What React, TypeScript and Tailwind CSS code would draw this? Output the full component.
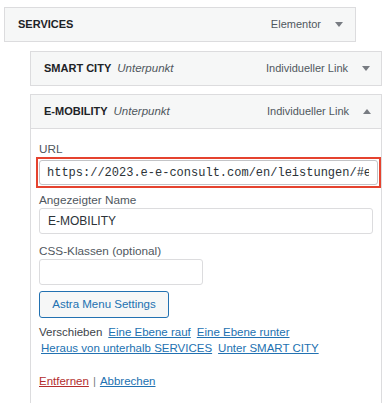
import React from 'react';

const font = { fontFamily: '"Liberation Sans", Arial, sans-serif' };

function Caret({ up }: { up?: boolean }) {
  return (
    <svg width="8" height="5" viewBox="0 0 8 5" className="shrink-0">
      {up ? <path d="M0 5 L4 0 L8 5 Z" fill="#787c82" /> : <path d="M0 0 L8 0 L4 5 Z" fill="#787c82" />}
    </svg>
  );
}

function ItemHandle({ title, sub, type, up, className }: { title: string; sub?: string; type: string; up?: boolean; className: string }) {
  return (
    <div className={`flex h-[35px] items-center justify-between border border-[#dcdcde] bg-[#f6f7f7] ${className}`}>
      <div className="flex items-baseline gap-[6px]">
        <span className="text-[11px] font-bold text-[#1d2327]">{title}</span>
        {sub && <span className="text-[11.5px] italic text-[#50575e]">{sub}</span>}
      </div>
      <div className="flex items-center gap-[14px]">
        <span className="text-[11px] text-[#50575e]">{type}</span>
        <Caret up={up} />
      </div>
    </div>
  );
}

export default function App() {
  return (
    <div className="h-[403px] w-[383px] overflow-hidden bg-white pl-[4px] pt-[7px]" style={font}>
      <ItemHandle title="SERVICES" type="Elementor" className="w-[352px] pl-[13px] pr-[12px]" />

      <ItemHandle title="SMART CITY" sub="Unterpunkt" type="Individueller Link" className="ml-[26px] mt-[9px] w-[352px] pl-[13px] pr-[11px]" />

      <div className="ml-[26px] mt-[8px] w-[352px] border-x border-t border-[#dcdcde]">
        <ItemHandle title="E-MOBILITY" sub="Unterpunkt" type="Individueller Link" up className="-mx-px -mt-px pl-[13px] pr-[10px]" />

        <div className="h-[300px] pl-[8px] pt-[12px] text-[11.75px] text-[#50575e]">
          <div className="leading-[16px]">URL</div>
          <div className="-ml-[3px] h-[31px] w-[345px] border-2 border-[#e5432f] p-[1px]">
            <div className="flex h-full items-center rounded-[3px] border border-[#c3c4c7] bg-white pl-[7px] pr-[8px]">
              <div
                className="overflow-hidden whitespace-nowrap text-[12px] text-[#2c3338]"
                style={{ fontFamily: '"Liberation Mono", monospace' }}
              >
                https://2023.e-e-consult.com/en/leistungen/#e-mobility
              </div>
            </div>
          </div>

          <div className="mt-[4px] leading-[16px]">Angezeigter Name</div>
          <div className="flex h-[26px] w-[334px] items-center rounded-[3px] border border-[#dcdcde] bg-white pl-[8px] text-[12px] text-[#2c3338]">
            E-MOBILITY
          </div>

          <div className="mt-[8px] leading-[17px]">CSS-Klassen (optional)</div>
          <div className="h-[26px] w-[164px] rounded-[3px] border border-[#dcdcde] bg-white" />

          <button className="mt-[6px] flex h-[27px] w-[130px] items-center justify-center rounded-[3px] border border-[#2271b1] bg-[#f6f7f7] text-[11.5px] text-[#2271b1]">
            Astra Menu Settings
          </button>

          <div className="mt-[6px] text-[11.5px] leading-[16px]">
            <div className="flex gap-[6px] text-[#3c434a]">
              <span>Verschieben</span>
              <a className="text-[#2271b1] underline">Eine Ebene rauf</a>
              <a className="text-[#2271b1] underline">Eine Ebene runter</a>
            </div>
            <div className="flex gap-[6px] pl-[2px]">
              <a className="text-[#2271b1] underline">Heraus von unterhalb SERVICES</a>
              <a className="text-[#2271b1] underline">Unter SMART CITY</a>
            </div>
          </div>

          <div className="mt-[17px] text-[11.5px] leading-[16px]">
            <a className="text-[#b32d2e] underline">Entfernen</a>
            <span className="mx-[4px] text-[#787c82]">|</span>
            <a className="text-[#2271b1] underline">Abbrechen</a>
          </div>
        </div>
      </div>
    </div>
  );
}
